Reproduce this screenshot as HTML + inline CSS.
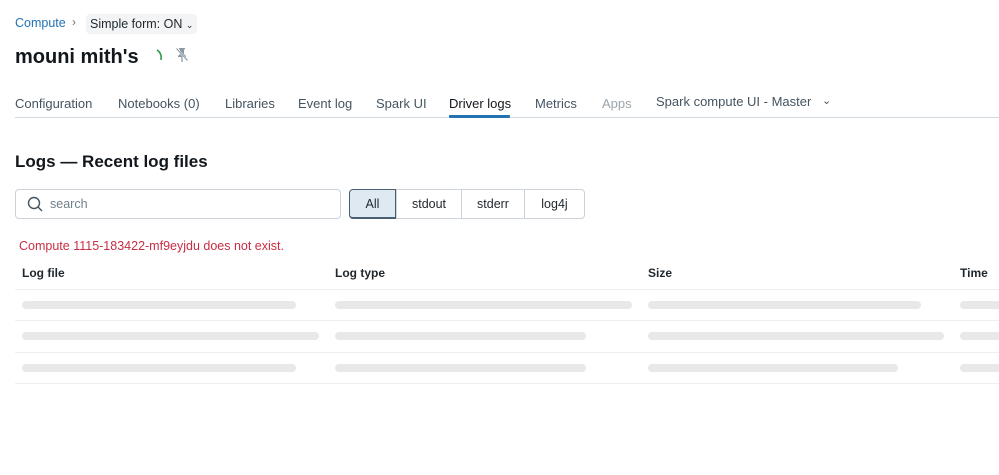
<!DOCTYPE html>
<html><head><meta charset="utf-8"><style>
*{margin:0;padding:0;box-sizing:border-box}
body{width:999px;height:475px;background:#fff;font-family:"Liberation Sans",sans-serif;color:#1f272d;position:relative;overflow:hidden}
.a{position:absolute;white-space:nowrap}
.tab{position:absolute;top:96px;font-size:13px;color:#445461}
.bar{position:absolute;height:8px;border-radius:4px;background:#e8e8e8}
.line{position:absolute;left:15px;width:984px;height:1px;background:#efefef}
.th{position:absolute;top:266px;font-size:12px;font-weight:bold;color:#1f272d}
.seg{position:absolute;top:189px;height:30px;border:1px solid #cbd2d9;font-size:12.5px;line-height:29px;text-align:center;background:#fff}
</style></head><body>
<div class="a" style="left:15px;top:16px;font-size:12.5px;color:#2272b4">Compute</div>
<div class="a" style="left:72px;top:15px;font-size:12px;color:#5f7281">›</div>
<div class="a" style="left:86px;top:14px;height:20px;padding:0 4px;background:#f2f4f5;border-radius:4px;font-size:12.5px;line-height:20px;color:#1f272d">Simple form: ON <span style="font-size:9px">⌄</span></div>
<div class="a" style="left:15px;top:46px;font-size:20px;font-weight:bold;color:#11171c">mouni mith's</div>
<svg class="a" style="left:155px;top:48px" width="10" height="14"><path d="M2 2 Q7 5 6 12" stroke="#2f9a48" stroke-width="1.6" fill="none"/></svg>
<svg class="a" style="left:175px;top:47px" width="14" height="16" viewBox="0 0 14 16"><path d="M4 1h6v1l-1 1v4l2 2v1H3V9l2-2V3L4 2z" fill="#8c9aa5"/><path d="M7 10v5" stroke="#8c9aa5" stroke-width="1.3"/><path d="M1 1l12 13" stroke="#fff" stroke-width="2"/><path d="M1.5 1.5l11 12" stroke="#8c9aa5" stroke-width="1.1"/></svg>
<div class="tab" style="left:15px">Configuration</div>
<div class="tab" style="left:118px">Notebooks (0)</div>
<div class="tab" style="left:225px">Libraries</div>
<div class="tab" style="left:298px">Event log</div>
<div class="tab" style="left:376px">Spark UI</div>
<div class="tab" style="left:449px;color:#11171c">Driver logs</div>
<div class="tab" style="left:535px">Metrics</div>
<div class="tab" style="left:602px;color:#9aa5ae">Apps</div>
<div class="tab" style="left:656px;top:94px">Spark compute UI - Master</div>
<div class="a" style="left:822px;top:94px;font-size:11px;color:#445461">⌄</div>
<div class="a" style="left:15px;top:117px;width:984px;height:1px;background:#d1d9e1"></div>
<div class="a" style="left:449px;top:115px;width:61px;height:3px;background:#2272b4;border-radius:1px"></div>
<div class="a" style="left:15px;top:152px;font-size:17px;font-weight:600;color:#11171c">Logs — Recent log files</div>
<div class="a" style="left:15px;top:189px;width:326px;height:30px;border:1px solid #cbd2d9;border-radius:4px"></div>
<svg class="a" style="left:27px;top:196px" width="16" height="16"><circle cx="7" cy="7" r="5.5" stroke="#445461" stroke-width="1.4" fill="none"/><path d="M11 11l4 4" stroke="#445461" stroke-width="1.4"/></svg>
<div class="a" style="left:50px;top:197px;font-size:12.5px;color:#6f7f8b">search</div>
<div class="seg" style="left:349px;width:48px;background:#dfe9f2;border-color:#4a6072;border-width:1px 2px 2px 1px;border-radius:4px 0 0 4px">All</div>
<div class="seg" style="left:396px;width:66px">stdout</div>
<div class="seg" style="left:461px;width:64px">stderr</div>
<div class="seg" style="left:524px;width:61px;border-radius:0 4px 4px 0">log4j</div>
<div class="a" style="left:19px;top:239px;font-size:12.5px;color:#c82d44">Compute 1115-183422-mf9eyjdu does not exist.</div>
<div class="th" style="left:22px">Log file</div>
<div class="th" style="left:335px">Log type</div>
<div class="th" style="left:648px">Size</div>
<div class="th" style="left:960px">Time</div>
<div class="line" style="top:289px"></div>
<div class="line" style="top:320px"></div>
<div class="line" style="top:352px"></div>
<div class="line" style="top:383px"></div>
<div class="bar" style="left:22px;top:301px;width:274px"></div>
<div class="bar" style="left:335px;top:301px;width:297px"></div>
<div class="bar" style="left:648px;top:301px;width:273px"></div>
<div class="bar" style="left:960px;top:301px;width:50px"></div>
<div class="bar" style="left:22px;top:332px;width:297px"></div>
<div class="bar" style="left:335px;top:332px;width:251px"></div>
<div class="bar" style="left:648px;top:332px;width:296px"></div>
<div class="bar" style="left:960px;top:332px;width:50px"></div>
<div class="bar" style="left:22px;top:364px;width:274px"></div>
<div class="bar" style="left:335px;top:364px;width:251px"></div>
<div class="bar" style="left:648px;top:364px;width:250px"></div>
<div class="bar" style="left:960px;top:364px;width:50px"></div>
</body></html>
